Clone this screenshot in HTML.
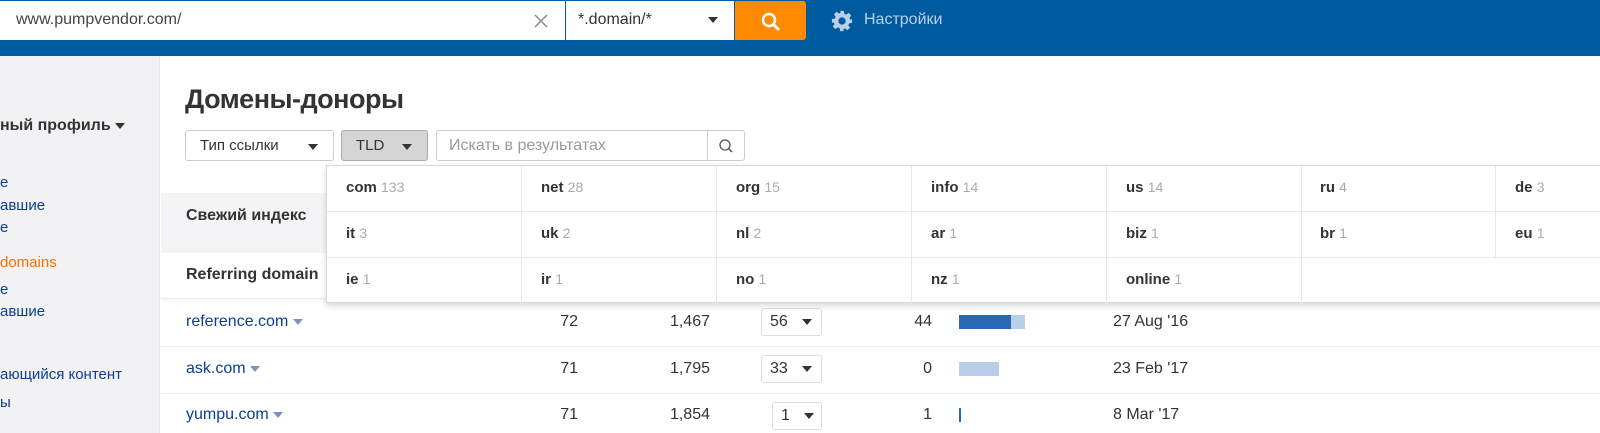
<!DOCTYPE html>
<html><head><meta charset="utf-8"><style>
*{margin:0;padding:0;box-sizing:border-box}
body{width:1600px;height:433px;overflow:hidden;position:relative;font-family:"Liberation Sans","Noto Sans CJK SC",sans-serif;background:#fff;color:#333}
.a{position:absolute}
.hdr{left:0;top:0;width:1600px;height:56px;background:#005a9e}
.inp{left:0;top:1px;width:565px;height:39px;background:#fff;border-radius:0 0 0 0}
.sel{left:566px;top:1px;width:168px;height:39px;background:#fff}
.btn{left:735px;top:1px;width:71px;height:39px;background:#ff8a00;border-radius:0 3px 3px 0}
.side{left:0;top:56px;width:160px;height:377px;background:#f2f2f4;border-right:1px solid #e6e6e8}
.sl{left:0;font-size:15px;color:#0b3d91}
.dd{left:326px;top:165px;width:1280px;height:138px;background:#fff;border:1px solid #d8d8d8;box-shadow:0 3px 6px rgba(0,0,0,.15)}
.c{position:absolute;width:195px;height:46px;border-right:1px solid #e8e8e8;border-bottom:1px solid #e8e8e8;font-size:15px;font-weight:bold;color:#333;padding:13px 0 0 19px}
.c span{font-weight:normal;color:#aaa;font-size:14px}
.row{left:161px;width:1439px;border-top:1px solid #ececec}
.num{font-size:16px;color:#333;text-align:right}
.box{height:28px;border:1px solid #ddd;border-radius:3px;font-size:16px;padding:4px 0 0 8px;background:#fff}
.lnk{font-size:16px;color:#0b3d91}
.tri{display:inline-block;width:0;height:0;border-left:5px solid transparent;border-right:5px solid transparent;border-top:6px solid #333;vertical-align:middle}
</style></head><body>
<div class="a hdr"></div>
<div class="a inp"><div class="a" style="left:16px;top:10px;font-size:16px;color:#444">www.pumpvendor.com/</div>
<svg class="a" style="left:533px;top:12px" width="16" height="16"><path d="M2 2L14 14M14 2L2 14" stroke="#888" stroke-width="1.5"/></svg></div>
<div class="a sel"><div class="a" style="left:12px;top:10px;font-size:16px;color:#333">*.domain/*</div><span class="a tri" style="left:142px;top:16px"></span></div>
<div class="a btn"><svg class="a" style="left:25px;top:10px" width="22" height="22"><circle cx="9" cy="9" r="6" stroke="#fff" stroke-width="2.5" fill="none"/><path d="M13 13L19 19" stroke="#fff" stroke-width="3"/></svg></div>
<svg class="a" style="left:831px;top:10px" width="22" height="22" viewBox="0 0 24 24"><path fill="#b9d0ea" d="M10 1h4l.6 3.2 2 .9 2.7-1.9 2.8 2.8-1.9 2.7.9 2L23 10v4l-3.2.6-.9 2 1.9 2.7-2.8 2.8-2.7-1.9-2 .9L14 23h-4l-.6-3.2-2-.9-2.7 1.9-2.8-2.8 1.9-2.7-.9-2L1 14v-4l3.2-.6.9-2L3.2 4.7 6 1.9l2.7 1.9 2-.9zM12 8a4 4 0 100 8 4 4 0 000-8z"/></svg>
<div class="a" style="left:864px;top:11px;font-size:16px;color:#b9d0ea">Настройки</div>
<div class="a side"></div>
<div class="a" style="left:0;top:117px;font-size:16px;color:#333;font-weight:bold">ный профиль <span class="tri" style="border-top-color:#333"></span></div>
<div class="a sl" style="top:174px">е</div>
<div class="a sl" style="top:197px">авшие</div>
<div class="a sl" style="top:219px">е</div>
<div class="a sl" style="top:254px;color:#ff6d00">domains</div>
<div class="a sl" style="top:281px">е</div>
<div class="a sl" style="top:303px">авшие</div>
<div class="a sl" style="top:366px">ающийся контент</div>
<div class="a sl" style="top:394px">ы</div>
<div class="a" style="left:185px;top:84px;font-size:27px;color:#333;font-weight:bold;letter-spacing:-0.5px">Домены-доноры</div>
<div class="a" style="left:185px;top:130px;width:149px;height:31px;border:1px solid #ccc;border-radius:3px;background:#fff"><div class="a" style="left:14px;top:6px;font-size:15px">Тип ссылки</div><span class="a tri" style="left:122px;top:13px"></span></div>
<div class="a" style="left:341px;top:130px;width:87px;height:31px;border:1px solid #aaa;border-radius:3px;background:#d5d5d5"><div class="a" style="left:14px;top:6px;font-size:15px">TLD</div><span class="a tri" style="left:60px;top:13px"></span></div>
<div class="a" style="left:436px;top:130px;width:309px;height:31px;border:1px solid #ccc;border-radius:3px;background:#fff"><div class="a" style="left:12px;top:6px;font-size:16px;color:#999">Искать в результатах</div><div class="a" style="left:270px;top:0;width:1px;height:29px;background:#ccc"></div>
<svg class="a" style="left:281px;top:7px" width="16" height="16"><circle cx="7" cy="7" r="5" stroke="#555" stroke-width="1.3" fill="none"/><path d="M10.5 10.5L14 14" stroke="#555" stroke-width="1.5"/></svg></div>
<div class="a" style="left:161px;top:193px;width:1439px;height:60px;background:#f4f4f6"></div>
<div class="a" style="left:186px;top:207px;font-size:16px;font-weight:bold">Свежий индекс</div>
<div class="a" style="left:186px;top:266px;font-size:16px;font-weight:bold">Referring domain</div>
<div class="a row" style="top:298px;height:1px;box-shadow:0 1px 2px rgba(0,0,0,.1)"></div>
<div class="a row" style="top:346px"></div>
<div class="a row" style="top:393px"></div>
<div class="a lnk" style="left:186px;top:313px">reference.com <span class="tri" style="border-top-color:#7f8fbf"></span></div>
<div class="a lnk" style="left:186px;top:360px">ask.com <span class="tri" style="border-top-color:#7f8fbf"></span></div>
<div class="a lnk" style="left:186px;top:406px">yumpu.com <span class="tri" style="border-top-color:#7f8fbf"></span></div>
<div class="a num" style="left:520px;top:313px;width:58px">72</div>
<div class="a num" style="left:520px;top:360px;width:58px">71</div>
<div class="a num" style="left:520px;top:406px;width:58px">71</div>
<div class="a num" style="left:640px;top:313px;width:70px">1,467</div>
<div class="a num" style="left:640px;top:360px;width:70px">1,795</div>
<div class="a num" style="left:640px;top:406px;width:70px">1,854</div>
<div class="a box" style="left:761px;top:308px;width:61px">56 <span class="tri" style="margin-left:10px"></span></div>
<div class="a box" style="left:761px;top:355px;width:61px">33 <span class="tri" style="margin-left:10px"></span></div>
<div class="a box" style="left:772px;top:402px;width:50px">1 <span class="tri" style="margin-left:10px"></span></div>
<div class="a num" style="left:880px;top:313px;width:52px">44</div>
<div class="a num" style="left:880px;top:360px;width:52px">0</div>
<div class="a num" style="left:880px;top:406px;width:52px">1</div>
<div class="a" style="left:959px;top:315px;width:66px;height:14px;background:#b9cfe8"></div>
<div class="a" style="left:959px;top:315px;width:52px;height:14px;background:#2a66b6"></div>
<div class="a" style="left:959px;top:362px;width:40px;height:14px;background:#b9cfe8"></div>
<div class="a" style="left:959px;top:408px;width:2px;height:14px;background:#2a66b6"></div>
<div class="a" style="left:1113px;top:313px;font-size:16px">27 Aug '16</div>
<div class="a" style="left:1113px;top:360px;font-size:16px">23 Feb '17</div>
<div class="a" style="left:1113px;top:406px;font-size:16px">8 Mar '17</div>
<div class="a dd">
<div class="c" style="left:0;top:0">com <span>133</span></div>
<div class="c" style="left:195px;top:0">net <span>28</span></div>
<div class="c" style="left:390px;top:0">org <span>15</span></div>
<div class="c" style="left:585px;top:0">info <span>14</span></div>
<div class="c" style="left:780px;top:0">us <span>14</span></div>
<div class="c" style="left:974px;top:0">ru <span>4</span></div>
<div class="c" style="left:1169px;top:0">de <span>3</span></div>
<div class="c" style="left:0;top:46px">it <span>3</span></div>
<div class="c" style="left:195px;top:46px">uk <span>2</span></div>
<div class="c" style="left:390px;top:46px">nl <span>2</span></div>
<div class="c" style="left:585px;top:46px">ar <span>1</span></div>
<div class="c" style="left:780px;top:46px">biz <span>1</span></div>
<div class="c" style="left:974px;top:46px">br <span>1</span></div>
<div class="c" style="left:1169px;top:46px">eu <span>1</span></div>
<div class="c" style="left:0;top:92px;border-bottom:0">ie <span>1</span></div>
<div class="c" style="left:195px;top:92px;border-bottom:0">ir <span>1</span></div>
<div class="c" style="left:390px;top:92px;border-bottom:0">no <span>1</span></div>
<div class="c" style="left:585px;top:92px;border-bottom:0">nz <span>1</span></div>
<div class="c" style="left:780px;top:92px;border-bottom:0">online <span>1</span></div>
</div>
</body></html>
